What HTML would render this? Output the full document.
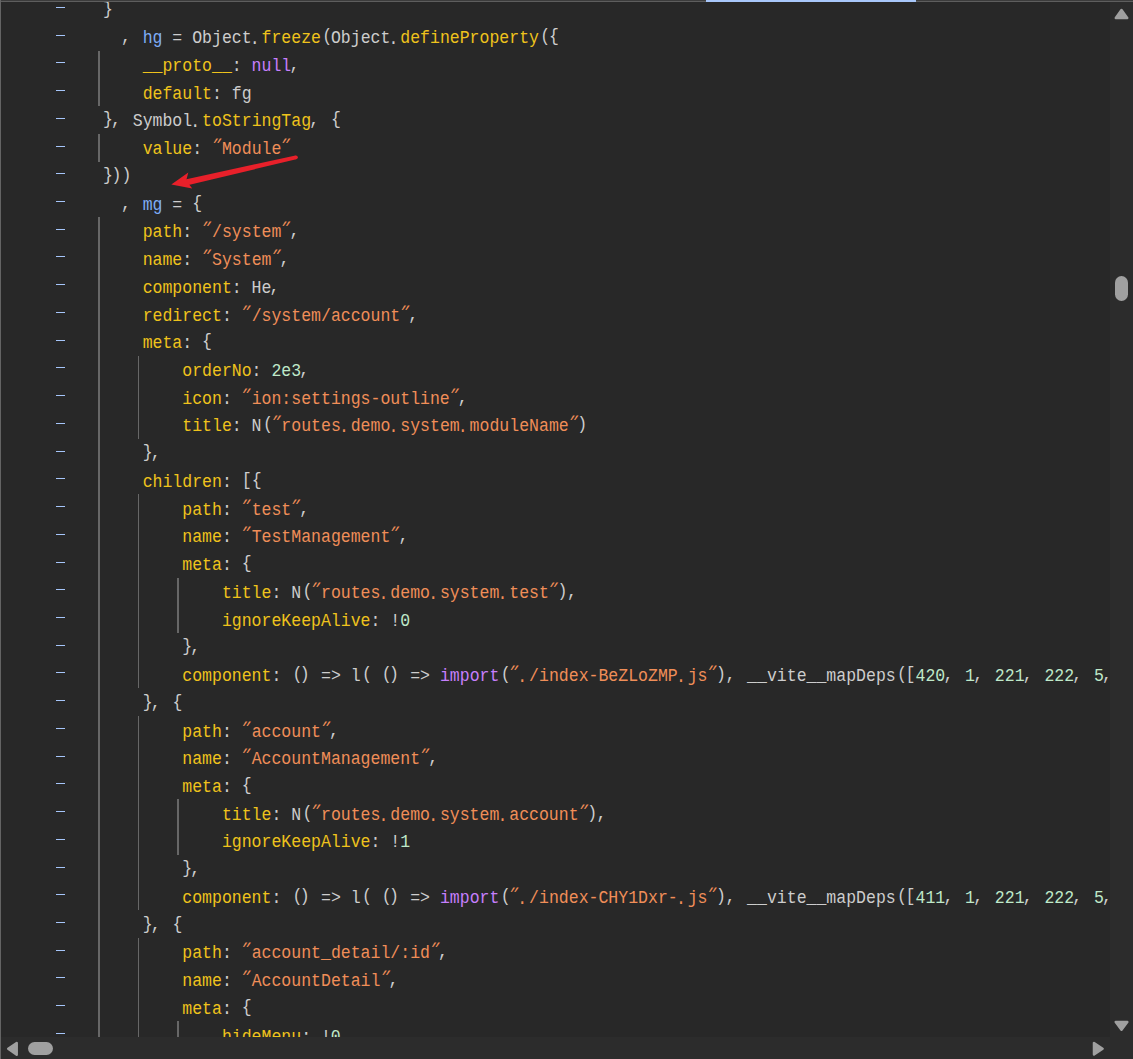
<!DOCTYPE html>
<html><head><meta charset="utf-8">
<style>
html,body{margin:0;padding:0;}
body{width:1133px;height:1059px;overflow:hidden;background:#282828;position:relative;}
#top{position:absolute;left:0;top:0;width:1133px;height:2px;background:#5e5e5e;border-top:0;box-shadow:inset 0 1px 0 #3c3c3c;}
#topblue{position:absolute;left:706px;top:0;width:210px;height:2px;background:#a8c7fa;}
#left{position:absolute;left:0;top:0;width:1px;height:1059px;background:#646464;}
#code{position:absolute;left:0;top:0;width:1110px;height:1037px;overflow:hidden;}
.ln{position:absolute;left:102.8px;height:27.73px;line-height:27.73px;white-space:pre;font-family:"Liberation Mono",monospace;font-size:18px;letter-spacing:0px;transform:scaleX(0.91713);transform-origin:0 0;color:#d4d4d4;}
.p{color:#efc31c}.s{color:#f08e58}.d{color:#7fadf6}.k{color:#c67ffc}.m{color:#bfe9c9}.n{color:#cdcdcd}
.q{font-style:normal;display:inline-block;transform:translateY(-3.2px) skewX(-35deg) scaleY(0.8);transform-origin:50% 30%;}
.br{font-weight:normal;display:inline-block;transform:translateY(-2.6px) scaleY(1.07);}
.pt{font-weight:normal;display:inline-block;transform:translate(-2px,0.7px);}.cm{transform:translate(-2px,-1px);}
.lp{transform:translate(1.5px,-2.6px) scaleY(1.07);}.rp{transform:translate(-1.5px,-2.6px) scaleY(1.07);}
.dash{position:absolute;left:55.6px;width:9.6px;height:1px;background:#a6c6fa;}
.g{position:absolute;width:1.8px;background:#676767;}
#vs{position:absolute;left:1110px;top:0;width:23px;height:1059px;background:#2c2c2c;}
#hs{position:absolute;left:0;top:1037px;width:1133px;height:22px;background:#2c2c2c;}
.thumb{position:absolute;background:#a0a0a0;border-radius:7px;}
</style></head><body>
<div id="code">
<div class="g" style="left:98.10px;top:50.70px;height:55.46px"></div><div class="g" style="left:98.10px;top:133.88px;height:27.73px"></div><div class="g" style="left:98.10px;top:217.07px;height:859.63px"></div><div class="g" style="left:137.65px;top:355.72px;height:83.19px"></div><div class="g" style="left:137.65px;top:494.37px;height:194.11px"></div><div class="g" style="left:137.65px;top:716.22px;height:194.11px"></div><div class="g" style="left:137.65px;top:938.06px;height:138.65px"></div><div class="g" style="left:177.20px;top:577.57px;height:55.46px"></div><div class="g" style="left:177.20px;top:799.40px;height:55.46px"></div><div class="g" style="left:177.20px;top:1021.25px;height:55.46px"></div>
<div class="dash" style="top:6.90px"></div><div class="dash" style="top:34.63px"></div><div class="dash" style="top:62.36px"></div><div class="dash" style="top:90.09px"></div><div class="dash" style="top:117.82px"></div><div class="dash" style="top:145.55px"></div><div class="dash" style="top:173.28px"></div><div class="dash" style="top:201.01px"></div><div class="dash" style="top:228.74px"></div><div class="dash" style="top:256.47px"></div><div class="dash" style="top:284.20px"></div><div class="dash" style="top:311.93px"></div><div class="dash" style="top:339.66px"></div><div class="dash" style="top:367.39px"></div><div class="dash" style="top:395.12px"></div><div class="dash" style="top:422.85px"></div><div class="dash" style="top:450.58px"></div><div class="dash" style="top:478.31px"></div><div class="dash" style="top:506.04px"></div><div class="dash" style="top:533.77px"></div><div class="dash" style="top:561.50px"></div><div class="dash" style="top:589.23px"></div><div class="dash" style="top:616.96px"></div><div class="dash" style="top:644.69px"></div><div class="dash" style="top:672.42px"></div><div class="dash" style="top:700.15px"></div><div class="dash" style="top:727.88px"></div><div class="dash" style="top:755.61px"></div><div class="dash" style="top:783.34px"></div><div class="dash" style="top:811.07px"></div><div class="dash" style="top:838.80px"></div><div class="dash" style="top:866.53px"></div><div class="dash" style="top:894.26px"></div><div class="dash" style="top:921.99px"></div><div class="dash" style="top:949.72px"></div><div class="dash" style="top:977.45px"></div><div class="dash" style="top:1005.18px"></div><div class="dash" style="top:1032.91px"></div>
<div class="ln" style="top:-2.46px"><span class="n"><b class="br">}</b></span></div><div class="ln" style="top:25.27px">  <span class="n"><b class="pt cm">,</b> </span><span class="d">hg </span><span class="n">= Object<b class="pt">.</b></span><span class="p">freeze</span><span class="n"><b class="br lp">(</b>Object<b class="pt">.</b></span><span class="p">defineProperty</span><span class="n"><b class="br lp">(</b><b class="br">{</b></span></div><div class="ln" style="top:52.99px">    <span class="p">__proto__</span><span class="n">: </span><span class="k">null</span><span class="n"><b class="pt cm">,</b></span></div><div class="ln" style="top:80.73px">    <span class="p">default</span><span class="n">: fg</span></div><div class="ln" style="top:108.46px"><span class="n"><b class="br">}</b><b class="pt cm">,</b> Symbol<b class="pt">.</b></span><span class="p">toStringTag</span><span class="n"><b class="pt cm">,</b> <b class="br">{</b></span></div><div class="ln" style="top:136.19px">    <span class="p">value</span><span class="n">: </span><span class="s"><i class="q">&quot;</i>Module<i class="q">&quot;</i></span></div><div class="ln" style="top:163.91px"><span class="n"><b class="br">}</b><b class="br rp">)</b><b class="br rp">)</b></span></div><div class="ln" style="top:191.65px">  <span class="n"><b class="pt cm">,</b> </span><span class="d">mg </span><span class="n">= <b class="br">{</b></span></div><div class="ln" style="top:219.38px">    <span class="p">path</span><span class="n">: </span><span class="s"><i class="q">&quot;</i>/system<i class="q">&quot;</i></span><span class="n"><b class="pt cm">,</b></span></div><div class="ln" style="top:247.10px">    <span class="p">name</span><span class="n">: </span><span class="s"><i class="q">&quot;</i>System<i class="q">&quot;</i></span><span class="n"><b class="pt cm">,</b></span></div><div class="ln" style="top:274.83px">    <span class="p">component</span><span class="n">: He<b class="pt cm">,</b></span></div><div class="ln" style="top:302.56px">    <span class="p">redirect</span><span class="n">: </span><span class="s"><i class="q">&quot;</i>/system/account<i class="q">&quot;</i></span><span class="n"><b class="pt cm">,</b></span></div><div class="ln" style="top:330.29px">    <span class="p">meta</span><span class="n">: <b class="br">{</b></span></div><div class="ln" style="top:358.02px">        <span class="p">orderNo</span><span class="n">: </span><span class="m">2e3</span><span class="n"><b class="pt cm">,</b></span></div><div class="ln" style="top:385.75px">        <span class="p">icon</span><span class="n">: </span><span class="s"><i class="q">&quot;</i>ion:settings-outline<i class="q">&quot;</i></span><span class="n"><b class="pt cm">,</b></span></div><div class="ln" style="top:413.48px">        <span class="p">title</span><span class="n">: N<b class="br lp">(</b></span><span class="s"><i class="q">&quot;</i>routes<b class="pt">.</b>demo<b class="pt">.</b>system<b class="pt">.</b>moduleName<i class="q">&quot;</i></span><span class="n"><b class="br rp">)</b></span></div><div class="ln" style="top:441.21px">    <span class="n"><b class="br">}</b><b class="pt cm">,</b></span></div><div class="ln" style="top:468.94px">    <span class="p">children</span><span class="n">: <b class="br">[</b><b class="br">{</b></span></div><div class="ln" style="top:496.67px">        <span class="p">path</span><span class="n">: </span><span class="s"><i class="q">&quot;</i>test<i class="q">&quot;</i></span><span class="n"><b class="pt cm">,</b></span></div><div class="ln" style="top:524.40px">        <span class="p">name</span><span class="n">: </span><span class="s"><i class="q">&quot;</i>TestManagement<i class="q">&quot;</i></span><span class="n"><b class="pt cm">,</b></span></div><div class="ln" style="top:552.13px">        <span class="p">meta</span><span class="n">: <b class="br">{</b></span></div><div class="ln" style="top:579.87px">            <span class="p">title</span><span class="n">: N<b class="br lp">(</b></span><span class="s"><i class="q">&quot;</i>routes<b class="pt">.</b>demo<b class="pt">.</b>system<b class="pt">.</b>test<i class="q">&quot;</i></span><span class="n"><b class="br rp">)</b><b class="pt cm">,</b></span></div><div class="ln" style="top:607.60px">            <span class="p">ignoreKeepAlive</span><span class="n">: !</span><span class="m">0</span></div><div class="ln" style="top:635.32px">        <span class="n"><b class="br">}</b><b class="pt cm">,</b></span></div><div class="ln" style="top:663.05px">        <span class="p">component</span><span class="n">: <b class="br lp">(</b><b class="br rp">)</b> =&gt; l<b class="br lp">(</b> <b class="br lp">(</b><b class="br rp">)</b> =&gt; </span><span class="k">import</span><span class="n"><b class="br lp">(</b></span><span class="s"><i class="q">&quot;</i><b class="pt">.</b>/index-BeZLoZMP<b class="pt">.</b>js<i class="q">&quot;</i></span><span class="n"><b class="br rp">)</b><b class="pt cm">,</b> __vite__mapDeps<b class="br lp">(</b><b class="br">[</b></span><span class="m">420</span><span class="n"><b class="pt cm">,</b> </span><span class="m">1</span><span class="n"><b class="pt cm">,</b> </span><span class="m">221</span><span class="n"><b class="pt cm">,</b> </span><span class="m">222</span><span class="n"><b class="pt cm">,</b> </span><span class="m">5</span><span class="n"><b class="pt cm">,</b></span></div><div class="ln" style="top:690.78px">    <span class="n"><b class="br">}</b><b class="pt cm">,</b> <b class="br">{</b></span></div><div class="ln" style="top:718.51px">        <span class="p">path</span><span class="n">: </span><span class="s"><i class="q">&quot;</i>account<i class="q">&quot;</i></span><span class="n"><b class="pt cm">,</b></span></div><div class="ln" style="top:746.25px">        <span class="p">name</span><span class="n">: </span><span class="s"><i class="q">&quot;</i>AccountManagement<i class="q">&quot;</i></span><span class="n"><b class="pt cm">,</b></span></div><div class="ln" style="top:773.98px">        <span class="p">meta</span><span class="n">: <b class="br">{</b></span></div><div class="ln" style="top:801.70px">            <span class="p">title</span><span class="n">: N<b class="br lp">(</b></span><span class="s"><i class="q">&quot;</i>routes<b class="pt">.</b>demo<b class="pt">.</b>system<b class="pt">.</b>account<i class="q">&quot;</i></span><span class="n"><b class="br rp">)</b><b class="pt cm">,</b></span></div><div class="ln" style="top:829.43px">            <span class="p">ignoreKeepAlive</span><span class="n">: !</span><span class="m">1</span></div><div class="ln" style="top:857.16px">        <span class="n"><b class="br">}</b><b class="pt cm">,</b></span></div><div class="ln" style="top:884.89px">        <span class="p">component</span><span class="n">: <b class="br lp">(</b><b class="br rp">)</b> =&gt; l<b class="br lp">(</b> <b class="br lp">(</b><b class="br rp">)</b> =&gt; </span><span class="k">import</span><span class="n"><b class="br lp">(</b></span><span class="s"><i class="q">&quot;</i><b class="pt">.</b>/index-CHY1Dxr-<b class="pt">.</b>js<i class="q">&quot;</i></span><span class="n"><b class="br rp">)</b><b class="pt cm">,</b> __vite__mapDeps<b class="br lp">(</b><b class="br">[</b></span><span class="m">411</span><span class="n"><b class="pt cm">,</b> </span><span class="m">1</span><span class="n"><b class="pt cm">,</b> </span><span class="m">221</span><span class="n"><b class="pt cm">,</b> </span><span class="m">222</span><span class="n"><b class="pt cm">,</b> </span><span class="m">5</span><span class="n"><b class="pt cm">,</b></span></div><div class="ln" style="top:912.62px">    <span class="n"><b class="br">}</b><b class="pt cm">,</b> <b class="br">{</b></span></div><div class="ln" style="top:940.36px">        <span class="p">path</span><span class="n">: </span><span class="s"><i class="q">&quot;</i>account_detail/:id<i class="q">&quot;</i></span><span class="n"><b class="pt cm">,</b></span></div><div class="ln" style="top:968.09px">        <span class="p">name</span><span class="n">: </span><span class="s"><i class="q">&quot;</i>AccountDetail<i class="q">&quot;</i></span><span class="n"><b class="pt cm">,</b></span></div><div class="ln" style="top:995.81px">        <span class="p">meta</span><span class="n">: <b class="br">{</b></span></div><div class="ln" style="top:1023.55px">            <span class="p">hideMenu</span><span class="n">: !</span><span class="m">0</span></div>
</div>
<div id="vs"></div>
<div id="hs"></div>
<div class="thumb" style="left:1115px;top:276px;width:13px;height:25px;"></div>
<div class="thumb" style="left:28px;top:1042px;width:25px;height:13px;"></div>
<svg style="position:absolute;left:0;top:0" width="1133" height="1059">
<g fill="#a0a0a0" stroke="#a0a0a0" stroke-width="2.5" stroke-linejoin="round">
<polygon points="1115.8,18 1127.2,18 1121.5,10"/>
<polygon points="1115.7,1022 1127.3,1022 1121.5,1029.8"/>
<polygon points="8.2,1048.8 16.7,1043 16.7,1054.7"/>
<polygon points="1102.6,1048.7 1094,1043 1094,1054.4"/>
</g>
<g fill="#e8202a"><circle cx="295.9" cy="157.3" r="1.9"/>
<polygon points="295.5,155.4 296.3,159.2 186.5,185.6 185.3,179.6"/>
<polygon points="171.3,184.6 188.3,172.5 186.2,180.5 192.2,188.6"/></g>
</svg>
<div id="top"></div><div id="topblue"></div><div id="left"></div>
</body></html>
